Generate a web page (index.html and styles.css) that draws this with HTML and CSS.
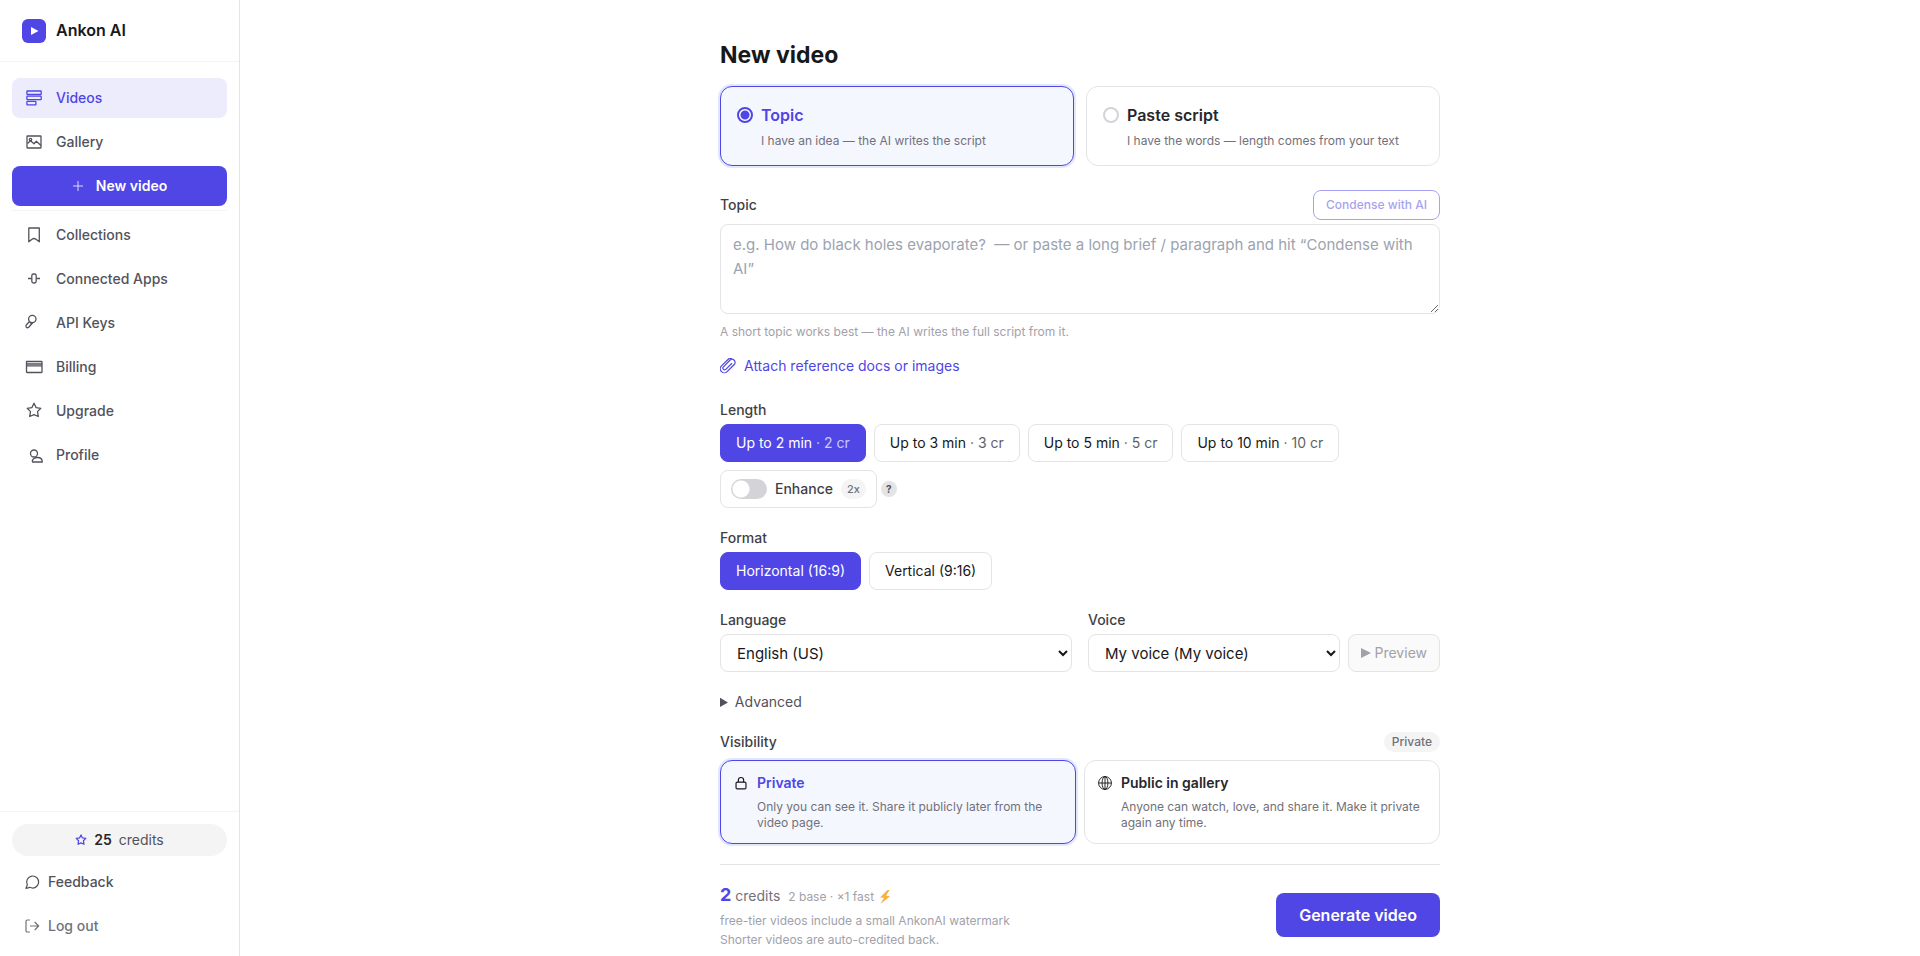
FILE: index.html
```html
<!DOCTYPE html>
<html lang="en">
<head>
    <meta charset="utf-8">
    <title>New video - Ankon AI</title>
    <link rel="stylesheet" href="styles.css">
</head>
<body>
    <div class="app">
        <aside class="sidebar">
            <a class="brand" href="#">
                <svg class="logo" viewBox="0 0 24 24"><rect width="24" height="24" rx="6" fill="#4f46e5"/><path d="M9 8v8l7.500-4z" fill="#fff"/></svg>
                Ankon AI
            </a>
            <nav class="nav">
                <a class="nav-item active" href="#">
                    <svg class="icon" viewBox="0 0 20 20"><rect x="2.900" y="3" width="14.300" height="3.500" rx=".5"/><rect x="2.900" y="8.200" width="14.300" height="3.500" rx=".5"/><rect x="2.900" y="13.400" width="9" height="3.500" rx=".5"/></svg>
                    Videos
                </a>
                <a class="nav-item" href="#">
                    <svg class="icon" viewBox="0 0 20 20"><rect x="3" y="4" width="14" height="12" rx=".5"/><circle cx="6.5" cy="7.6" r="1.2"/><path d="M3.5 11.5l3-2.8 3.5 3 2.3-2.4 4.7 4.2"/></svg>
                    Gallery
                </a>
                <a class="nav-new" href="#">
                    <svg class="plus" viewBox="0 0 12 12"><path d="M6 1v10M1 6h10"/></svg>
                    New video
                </a>
                <hr class="nav-line">
                <a class="nav-item" href="#">
                    <svg class="icon" viewBox="0 0 20 20"><path d="M4.8 3h10.5v13.8L12 14.2q-2-1.400-4 0l-3.200 2.600z"/></svg>
                    Collections
                </a>
                <a class="nav-item" href="#">
                    <svg class="icon" viewBox="0 0 20 20"><rect x="7.800" y="5" width="4.400" height="9" rx="1.800"/><path d="M4 9.500h3.500M12.500 9.500H16"/></svg>
                    Connected Apps
                </a>
                <a class="nav-item" href="#">
                    <svg class="icon" viewBox="0 0 20 20"><circle cx="8.300" cy="6" r="3.700"/><path d="M5.500 8.500l-3 3.200c-1.500 1.800.2 4 2.200 2.600l4-4.600M6 9.200l2 2"/></svg>
                    API Keys
                </a>
                <a class="nav-item" href="#">
                    <svg class="icon" viewBox="0 0 20 20"><rect x="2.500" y="4.500" width="15.500" height="11" rx=".5"/><path d="M2.500 7h15.500M2.500 8.800h15.500"/></svg>
                    Billing
                </a>
                <a class="nav-item" href="#">
                    <svg class="icon" viewBox="0 0 20 20"><path d="M10 2.200l2.100 4.400 4.700.7-3.300 3.300.8 4.900-4.300-1.800-4.300 1.800.8-4.900-3.300-3.300 4.700-.7z"/></svg>
                    Upgrade
                </a>
                <a class="nav-item" href="#">
                    <svg class="icon" viewBox="0 0 20 20"><circle cx="10" cy="8.500" r="3.500"/><path d="M8.500 17c-1-2 1.500-4.500 5-4.500 3 0 4.800 2 4.800 4.500z"/></svg>
                    Profile
                </a>
            </nav>
            <div class="side-foot">
                <a class="credit-pill" href="#">
                    <svg class="star" viewBox="0 0 20 20"><path d="M10 1.500l2.400 5 5.600.8-4 3.900 1 6-5-2.400-5 2.400 1-6-4-3.900 5.600-.8z"/></svg>
                    <b>25</b> credits
                </a>
                <a class="foot-item" href="#">
                    <svg class="foot-icon" viewBox="0 0 24 24"><path d="M8.900 20A9 9 0 1 0 5 16.100L3 21.500z"/></svg>
                    Feedback
                </a>
                <button class="foot-item logout" type="button">
                    <svg class="foot-icon" viewBox="0 0 24 24"><path d="M9 3H5a2 2 0 0 0-2 2v14a2 2 0 0 0 2 2h4M16 18l6-6-6-6M22 12H9"/></svg>
                    Log out
                </button>
            </div>
        </aside>

        <main class="main">
            <form class="form">
                <h1>New video</h1>

                <div class="modes">
                    <label class="card selected">
                        <input class="radio" type="radio" name="mode" checked>
                        <span class="card-title">Topic</span>
                        <span class="card-desc">I have an idea — the AI writes the script</span>
                    </label>
                    <label class="card">
                        <input class="radio" type="radio" name="mode">
                        <span class="card-title">Paste script</span>
                        <span class="card-desc">I have the words — length comes from your text</span>
                    </label>
                </div>

                <div class="row topic-row">
                    <label class="label" for="topic">Topic</label>
                    <button class="condense" type="button" disabled>Condense with AI</button>
                </div>
                <textarea class="topic" id="topic" placeholder="e.g. How do black holes evaporate?  — or paste a long brief / paragraph and hit “Condense with AI”"></textarea>
                <p class="hint">A short topic works best — the AI writes the full script from it.</p>
                <button class="attach" type="button">
                    <svg class="clip" viewBox="0 0 24 24"><path d="M18.400 12.700l-7.700 7.700a6 6 0 0 1-8.500-8.500L12.400 1.800a4.100 4.100 0 0 1 5.800 0M18.400 12.700l2.900-2.900a4.500 4.500 0 0 0-6.400-6.400L5.100 13.300a2.600 2.600 0 0 0 3.700 3.700l8.700-8.700"/></svg>
                    Attach reference docs or images
                </button>

                <div class="field">
                    <div class="label">Length</div>
                    <div class="options">
                        <button class="option on" type="button">Up to 2 min <span>· 2 cr</span></button>
                        <button class="option" type="button">Up to 3 min <span>· 3 cr</span></button>
                        <button class="option" type="button">Up to 5 min <span>· 5 cr</span></button>
                        <button class="option" type="button">Up to 10 min <span>· 10 cr</span></button>
                        <div class="enhance-wrap">
                            <label class="enhance">
                                <input class="switch" type="checkbox">
                                Enhance
                                <span class="times">2x</span>
                            </label>
                            <button class="help" type="button">?</button>
                        </div>
                    </div>
                </div>

                <div class="field">
                    <div class="label">Format</div>
                    <div class="options">
                        <button class="option on" type="button">Horizontal (16:9)</button>
                        <button class="option" type="button">Vertical (9:16)</button>
                    </div>
                </div>

                <div class="field two-col">
                    <div>
                        <label class="label" for="language">Language</label>
                        <select class="select" id="language"><option>English (US)</option></select>
                    </div>
                    <div>
                        <label class="label" for="voice">Voice</label>
                        <div class="voice-row">
                            <select class="select" id="voice"><option>My voice (My voice)</option></select>
                            <button class="preview" type="button" disabled>
                                <svg class="play" viewBox="0 0 10 10"><path d="M0 0v10l10-5z"/></svg>
                                Preview
                            </button>
                        </div>
                    </div>
                </div>

                <details class="field advanced">
                    <summary>Advanced</summary>
                </details>

                <div class="field row">
                    <div class="label">Visibility</div>
                    <span class="badge">Private</span>
                </div>
                <div class="visibility">
                    <button class="vis selected" type="button">
                        <svg class="vis-icon" viewBox="0 0 24 24"><rect x="3.500" y="10.500" width="17" height="11.500" rx="2"/><path d="M7.500 10.500V7a4.500 4.500 0 0 1 9 0v3.500"/></svg>
                        <span class="vis-title">Private</span>
                        <span class="vis-desc">Only you can see it. Share it publicly later from the video page.</span>
                    </button>
                    <button class="vis" type="button">
                        <svg class="vis-icon globe" viewBox="0 0 24 24"><circle cx="12" cy="12" r="11"/><ellipse cx="12" cy="12" rx="5" ry="11"/><path d="M1 12h22M12 1v22"/></svg>
                        <span class="vis-title">Public in gallery</span>
                        <span class="vis-desc">Anyone can watch, love, and share it. Make it private again any time.</span>
                    </button>
                </div>

                <div class="submit">
                    <div>
                        <div class="cost">
                            <b>2</b> <span class="unit">credits</span>
                            <small>2 base · ×1 fast <svg class="bolt" viewBox="0 0 12 14"><path d="M8.500 0L1 7.500l4 .3L1.500 14 11 6.200l-4-.4L10.500 0z" fill="#fbb03b"/></svg></small>
                        </div>
                        <p class="note">free-tier videos include a small AnkonAI watermark</p>
                        <p class="note">Shorter videos are auto-credited back.</p>
                    </div>
                    <button class="generate" type="submit">Generate video</button>
                </div>
            </form>
        </main>
    </div>
</body>
</html>
```
FILE: styles.css
```css
* {
    box-sizing: border-box;
}
body {
    margin: 0;
    font-family: Inter, "Liberation Sans", sans-serif;
    font-size: 14px;
    line-height: 20px;
    color: #18181b;
    background: #fff;
}
button, select, textarea {
    font: inherit;
    color: inherit;
    margin: 0;
}
button {
    cursor: pointer;
}
a {
    color: inherit;
    text-decoration: none;
}
p, h1 {
    margin: 0;
}
svg {
    fill: none;
    stroke-linejoin: round;
    flex: none;
}
.app {
    display: flex;
    height: 100vh;
}

/* sidebar */
.sidebar {
    width: 240px;
    flex: none;
    display: flex;
    flex-direction: column;
    border-right: 1px solid #e4e4e7;
}
.brand {
    display: flex;
    align-items: center;
    gap: 10px;
    padding: 18px 22px;
    border-bottom: 1px solid #f4f4f5;
    font-size: 16px;
    line-height: 25px;
    font-weight: 600;
}
.logo {
    width: 24px;
    height: 24px;
}
.nav {
    flex: 1;
    display: flex;
    flex-direction: column;
    gap: 4px;
    padding: 16px 12px;
}
.nav-item, .nav-new {
    display: flex;
    align-items: center;
    gap: 12px;
    height: 40px;
    padding: 0 12px;
    border-radius: 8px;
    font-weight: 500;
    color: #52525b;
}
.nav-item.active {
    background: #edecfc;
    color: #4f46e5;
}
.nav-new {
    justify-content: center;
    background: #4f46e5;
    color: #fff;
    font-weight: 600;
}
.nav-line {
    width: 100%;
    margin: 0;
    border: 0;
    border-top: 1px solid #f4f4f5;
}
.icon {
    width: 20px;
    height: 20px;
    stroke: currentColor;
    stroke-width: 1.3;
}
.plus {
    width: 12px;
    height: 12px;
    stroke: #dcdafa;
}
.side-foot {
    padding: 12px 12px 8px;
    border-top: 1px solid #f4f4f5;
}
.credit-pill {
    display: flex;
    align-items: center;
    justify-content: center;
    gap: 7px;
    height: 32px;
    margin-bottom: 4px;
    border-radius: 16px;
    background: #f4f4f5;
    color: #52525b;
}
.credit-pill b {
    font-weight: 600;
    color: #27272a;
}
.star {
    width: 12px;
    height: 12px;
    stroke: #4f46e5;
    stroke-width: 2;
}
.foot-item {
    display: flex;
    align-items: center;
    gap: 8px;
    width: 100%;
    height: 44px;
    padding: 0 12px;
    border: 0;
    background: none;
    font-weight: 500;
    color: #52525b;
}
.logout {
    color: #71717a;
}
.foot-icon {
    width: 16px;
    height: 16px;
    stroke: currentColor;
    stroke-width: 1.8;
}

/* form */
.main {
    flex: 1;
    overflow: auto;
    padding: 40px 24px 0;
}
.form {
    max-width: 720px;
    margin: 0 auto;
}
h1 {
    font-size: 23px;
    line-height: 30px;
    font-weight: 700;
    margin-bottom: 16px;
}
.modes {
    display: grid;
    grid-template-columns: 1fr 1fr;
    gap: 12px;
    margin-bottom: 24px;
}
.card {
    display: grid;
    grid-template-columns: 16px 1fr;
    column-gap: 8px;
    row-gap: 6px;
    align-items: center;
    padding: 16px;
    border: 1px solid #e4e4e7;
    border-radius: 12px;
    cursor: pointer;
}
.selected {
    border-color: #4f46e5;
    background: #f5f7ff;
    box-shadow: 0 0 0 2px #e0e7ff;
}
.card-title {
    font-size: 16px;
    line-height: 24px;
    font-weight: 600;
    color: #27272a;
}
.selected .card-title, .selected .vis-title {
    color: #4f46e5;
}
.card-desc {
    grid-column: 2;
    font-size: 12px;
    line-height: 16px;
    color: #71717a;
}
.radio {
    appearance: none;
    width: 16px;
    height: 16px;
    margin: 0;
    border: 2px solid #d4d4d8;
    border-radius: 50%;
    background: #fff;
}
.radio:checked {
    border-color: #4f46e5;
    background: radial-gradient(circle, #4f46e5 4px, #fff 5px);
}
.row {
    display: flex;
    align-items: center;
    justify-content: space-between;
}
.label {
    display: block;
    font-weight: 500;
    color: #3f3f46;
}
.topic-row {
    margin-bottom: 4px;
}
.condense {
    height: 30px;
    padding: 0 12px;
    border: 1px solid #4f46e5;
    border-radius: 8px;
    background: none;
    font-size: 12px;
    font-weight: 500;
    color: #4f46e5;
    opacity: 0.5;
}
.topic {
    display: block;
    width: 100%;
    height: 90px;
    padding: 8px 12px;
    border: 1px solid #e4e4e7;
    border-radius: 8px;
    font-size: 15px;
    line-height: 24px;
    resize: vertical;
}
.topic::placeholder {
    color: #9ca3af;
}
.hint {
    margin: 10px 0 16px;
    font-size: 12px;
    line-height: 16px;
    color: #a1a1aa;
}
.attach {
    display: flex;
    align-items: center;
    gap: 8px;
    margin-bottom: 24px;
    padding: 0;
    border: 0;
    background: none;
    color: #4f46e5;
}
.clip {
    width: 16px;
    height: 16px;
    stroke: currentColor;
    stroke-width: 1.8;
    stroke-linecap: round;
}
.field {
    margin-bottom: 20px;
}
.options {
    display: flex;
    flex-wrap: wrap;
    gap: 8px;
    margin-top: 4px;
}
.option {
    height: 38px;
    padding: 0 15px;
    border: 1px solid #e4e4e7;
    border-radius: 8px;
    background: #fff;
}
.option span {
    opacity: 0.7;
}
.option.on {
    border-color: #4f46e5;
    background: #4f46e5;
    color: #fff;
}
.enhance-wrap {
    display: flex;
    flex-basis: 100%;
    align-items: center;
    gap: 4px;
}
.enhance {
    display: flex;
    align-items: center;
    gap: 8px;
    height: 38px;
    padding: 0 10px;
    border: 1px solid #e4e4e7;
    border-radius: 8px;
    font-weight: 500;
    color: #3f3f46;
}
.switch {
    appearance: none;
    width: 36px;
    height: 20px;
    margin: 0;
    border-radius: 10px;
    background: radial-gradient(circle at 10px 10px, #fff 8px, #d4d4d8 9px);
}
.switch:checked {
    background: radial-gradient(circle at 26px 10px, #fff 8px, #4f46e5 9px);
}
.times {
    padding: 0 6px;
    border-radius: 10px;
    background: #f4f4f5;
    font-size: 11px;
    color: #71717a;
}
.help {
    width: 16px;
    height: 16px;
    padding: 0;
    border: 0;
    border-radius: 50%;
    background: #e4e4e7;
    font-size: 10px;
    line-height: 16px;
    font-weight: 700;
    color: #52525b;
}
.two-col {
    display: grid;
    grid-template-columns: 1fr 1fr;
    gap: 16px;
}
.select {
    width: 100%;
    min-width: 0;
    height: 38px;
    margin-top: 4px;
    padding: 0 12px;
    border: 1px solid #e4e4e7;
    border-radius: 8px;
    background: #fff;
    font-size: 15px;
}
.voice-row {
    display: flex;
    align-items: flex-end;
    gap: 8px;
}
.preview {
    display: flex;
    align-items: center;
    gap: 4px;
    height: 38px;
    padding: 0 12px;
    border: 1px solid #e4e4e7;
    border-radius: 8px;
    background: #fafafa;
    color: #a1a1aa;
}
.play {
    width: 10px;
    height: 10px;
    fill: currentColor;
}
.advanced {
    color: #52525b;
}
.field.row {
    margin-bottom: 8px;
}
.badge {
    padding: 0 8px;
    border-radius: 10px;
    background: #f4f4f5;
    font-size: 12px;
    font-weight: 500;
    color: #71717a;
}
.visibility {
    display: grid;
    grid-template-columns: 1fr 1fr;
    gap: 8px;
    margin-bottom: 20px;
}
.vis {
    display: grid;
    grid-template-columns: 14px 1fr;
    column-gap: 9px;
    row-gap: 6px;
    align-items: center;
    padding: 12px 13px;
    border: 1px solid #e4e4e7;
    border-radius: 12px;
    background: #fff;
    text-align: left;
}
.vis.selected {
    border-color: #4f46e5;
    background: #f5f7ff;
}
.vis-icon {
    width: 14px;
    height: 14px;
    stroke: #18181b;
    stroke-width: 2;
}
.vis-icon.globe {
    stroke-width: 1.6;
}
.vis-title {
    font-weight: 600;
    color: #27272a;
}
.vis-desc {
    grid-column: 2;
    font-size: 12px;
    line-height: 16px;
    color: #71717a;
}
.submit {
    display: flex;
    align-items: center;
    justify-content: space-between;
    padding: 16px 0;
    border-top: 1px solid #e4e4e7;
}
.cost {
    line-height: 28px;
    color: #71717a;
}
.cost b {
    font-size: 18px;
    color: #4f46e5;
}
.unit {
    margin-right: 4px;
}
.cost small {
    font-size: 12px;
    color: #a1a1aa;
}
.bolt {
    width: 12px;
    height: 14px;
    margin-left: 2px;
    vertical-align: -3px;
}
.note {
    font-size: 12px;
    line-height: 19px;
    color: #a1a1aa;
}
.generate {
    height: 44px;
    padding: 0 23px;
    border: 0;
    border-radius: 8px;
    background: #4f46e5;
    color: #fff;
    font-size: 16px;
    font-weight: 600;
}
```
